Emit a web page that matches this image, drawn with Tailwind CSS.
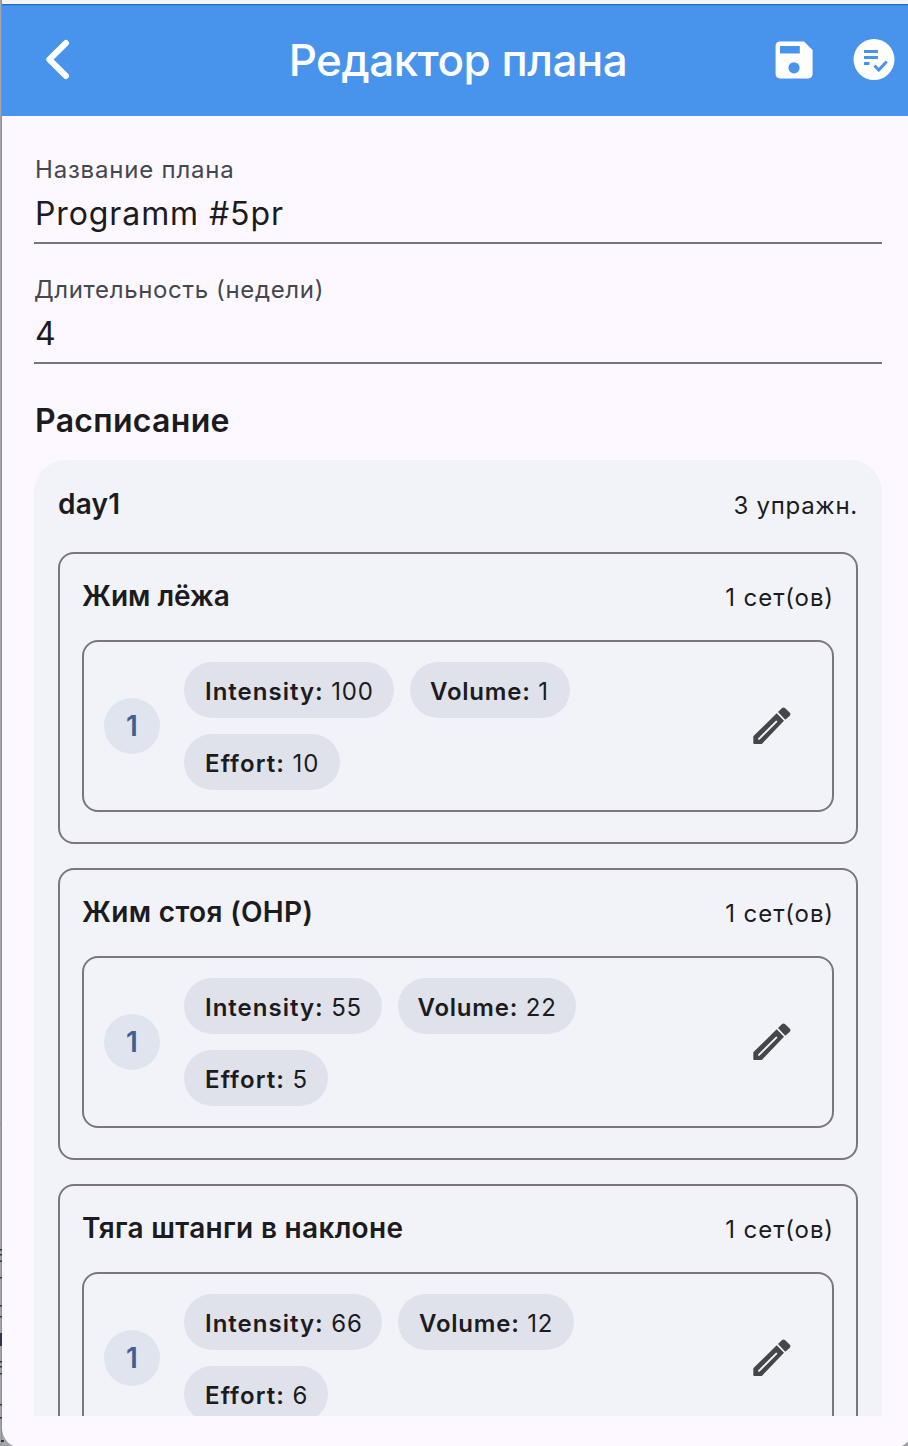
<!DOCTYPE html>
<html lang="ru">
<head>
<meta charset="utf-8">
<title>Редактор плана</title>
<script src="https://cdn.jsdelivr.net/npm/@tailwindcss/browser@4"></script>
</head>
<body class="w-[908px] h-[1446px] overflow-hidden bg-[#a6a6ae] font-['Inter','Liberation_Sans',sans-serif] text-[#1c1b20]">
<div class="relative h-[1446px] w-[908px] overflow-hidden bg-[#a3a3aa] pl-[2px]">
<!-- sliver of the desktop behind the window -->
<svg class="absolute left-0 top-0 h-[1446px] w-6" viewBox="0 0 24 1446"><path fill="#8f8f96" d="M1 0h1v1446H1zM0 1124h2v1H0z"/><path fill="#30344f" d="M0 1249h2v1.500H0zM0 1254h2v1.500H0zM0 1260.500h2v1.500H0zM0 1277h2v1.500H0zM0 1305h2v1.500H0zM0 1316h2v1.500H0zM0 1333h2v13H0zM0 1361h2v1.500H0zM0 1366h2v1.500H0zM0 1373h2v1.500H0zM0 1404h2v1.500H0zM0 1417h2v1.500H0zM1 1440h3v2H1z"/></svg>
<div class="relative flex h-[1448px] w-[911px] flex-col overflow-hidden rounded-b-[20px] bg-[#fdf8ff]">
  <div class="h-1 shrink-0 bg-[#f4f4f5]"></div>
  <header class="flex h-28 shrink-0 items-center border-t border-[#1f6fc9] bg-[#4894ed] pb-[2px] pr-[5px] text-white shadow-[inset_0_1px_0_#3f86d8]">
    <svg class="ml-8 size-12 shrink-0" viewBox="0 0 48 48" fill="none" stroke="currentColor" stroke-width="6" stroke-linecap="round" stroke-linejoin="round"><path d="M32 7 15.300 23.500 32 40"/></svg>
    <h1 class="flex-1 pl-[64px] text-center text-[44px] font-medium leading-[56px] tracking-[-0.5px]">Редактор плана</h1>
    <svg class="size-12 shrink-0" viewBox="0 0 24 24" fill="currentColor"><path d="M17 2.700H5c-1.300 0-2.200.9-2.200 2.200V19c0 1.300.9 2.200 2.200 2.200h14.100c1.300 0 2.200-.9 2.200-2.200V7l-4.300-4.300zM12 18.700a2.800 2.800 0 1 1 0-5.600 2.800 2.800 0 0 1 0 5.600zM14.900 8.700H5V5h9.900z"/></svg>
    <svg class="ml-8 mr-[10px] size-12 shrink-0" viewBox="0 0 48 48"><circle cx="24" cy="23.500" r="20.500" fill="#fff"/><g fill="none" stroke="#4894ed" stroke-width="3"><path d="M14 15.500h14M14 21.500h14M14 27.500h5.500M24.500 29.500l4.200 4.500 8-8.500"/></g></svg>
  </header>
  <main class="mx-8 h-[1300px] w-[848px] shrink-0 overflow-hidden pt-9">
    <label class="block h-[92px] border-b-2 border-[#74777f]">
      <span class="block h-8 pl-px text-[24px] leading-[35px] tracking-[0.8px] text-[#44474e]">Название плана</span>
      <span class="block pl-px text-[32px] leading-[59px] tracking-[0.9px]">Programm #5pr</span>
    </label>
    <label class="mt-7 block h-[92px] border-b-2 border-[#74777f]">
      <span class="block h-8 text-[24px] leading-[35px] tracking-[0.65px] text-[#44474e]">Длительность (недели)</span>
      <span class="block pl-px text-[32px] leading-[59px] tracking-[0.8px]">4</span>
    </label>
    <h2 class="mt-8 h-16 pl-px text-[32px] font-semibold leading-[50px] tracking-[0.3px]">Расписание</h2>
    <section class="h-[1200px] rounded-t-[32px] bg-[#f1f3f8] px-6 pt-6">
      <div class="flex h-[68px] justify-between">
        <h3 class="text-[28px] font-semibold leading-[41px] tracking-[0.2px]">day1</h3>
        <span class="text-[24px] leading-[44px] tracking-[0.7px]">3 упражн.</span>
      </div>
      <article class="mb-6 h-[292px] rounded-2xl border-2 border-[#79767f] px-[22px] pt-[22px]">
        <div class="flex h-16 justify-between">
          <h4 class="text-[28px] font-semibold leading-[41px]">Жим лёжа</h4>
          <span class="text-[24px] leading-[44px] tracking-[0.9px]">1 сет(ов)</span>
        </div>
        <div class="flex h-[172px] items-center rounded-2xl border-2 border-[#79767f] pl-5 pr-9">
          <div class="flex size-14 shrink-0 items-center justify-center rounded-full bg-[#dfe4ef] text-[28px] font-semibold text-[#415f91]">1</div>
          <div class="ml-6 flex w-[450px] flex-wrap gap-4 text-[24px] leading-[59px] tracking-[0.8px]">
            <div class="h-14 w-[210px] whitespace-nowrap rounded-full bg-[#dfe2eb] pl-[21px]"><b class="font-semibold tracking-[1px]">Intensity:</b> 100</div>
            <div class="h-14 w-[160px] whitespace-nowrap rounded-full bg-[#dfe2eb] pl-5"><b class="font-semibold">Volume:</b> 1</div>
            <div class="h-14 w-[156px] whitespace-nowrap rounded-full bg-[#dfe2eb] pl-[21px]"><b class="font-semibold tracking-[1.1px]">Effort:</b> 10</div>
          </div>
          <svg class="ml-auto size-12" viewBox="0 0 48 48"><use href="#pencil"/></svg>
        </div>
      </article>
      <article class="mb-6 h-[292px] rounded-2xl border-2 border-[#79767f] px-[22px] pt-[22px]">
        <div class="flex h-16 justify-between">
          <h4 class="text-[28px] font-semibold leading-[41px] tracking-[0.35px]">Жим стоя (OHP)</h4>
          <span class="text-[24px] leading-[44px] tracking-[0.9px]">1 сет(ов)</span>
        </div>
        <div class="flex h-[172px] items-center rounded-2xl border-2 border-[#79767f] pl-5 pr-9">
          <div class="flex size-14 shrink-0 items-center justify-center rounded-full bg-[#dfe4ef] text-[28px] font-semibold text-[#415f91]">1</div>
          <div class="ml-6 flex w-[450px] flex-wrap gap-4 text-[24px] leading-[59px] tracking-[0.8px]">
            <div class="h-14 w-[197.500px] whitespace-nowrap rounded-full bg-[#dfe2eb] pl-[21px]"><b class="font-semibold tracking-[1px]">Intensity:</b> 55</div>
            <div class="h-14 w-[178.500px] whitespace-nowrap rounded-full bg-[#dfe2eb] pl-5"><b class="font-semibold">Volume:</b> 22</div>
            <div class="h-14 w-[144px] whitespace-nowrap rounded-full bg-[#dfe2eb] pl-[21px]"><b class="font-semibold tracking-[1.1px]">Effort:</b> 5</div>
          </div>
          <svg class="ml-auto size-12" viewBox="0 0 48 48"><use href="#pencil"/></svg>
        </div>
      </article>
      <article class="mb-6 h-[292px] rounded-2xl border-2 border-[#79767f] px-[22px] pt-[22px]">
        <div class="flex h-16 justify-between">
          <h4 class="text-[28px] font-semibold leading-[41px] tracking-[0.3px]">Тяга штанги в наклоне</h4>
          <span class="text-[24px] leading-[44px] tracking-[0.9px]">1 сет(ов)</span>
        </div>
        <div class="flex h-[172px] items-center rounded-2xl border-2 border-[#79767f] pl-5 pr-9">
          <div class="flex size-14 shrink-0 items-center justify-center rounded-full bg-[#dfe4ef] text-[28px] font-semibold text-[#415f91]">1</div>
          <div class="ml-6 flex w-[450px] flex-wrap gap-4 text-[24px] leading-[59px] tracking-[0.8px]">
            <div class="h-14 w-[198px] whitespace-nowrap rounded-full bg-[#dfe2eb] pl-[21px]"><b class="font-semibold tracking-[1px]">Intensity:</b> 66</div>
            <div class="h-14 w-[176px] whitespace-nowrap rounded-full bg-[#dfe2eb] pl-[21px]"><b class="font-semibold">Volume:</b> 12</div>
            <div class="h-14 w-[144px] whitespace-nowrap rounded-full bg-[#dfe2eb] pl-[21px]"><b class="font-semibold tracking-[1.1px]">Effort:</b> 6</div>
          </div>
          <svg class="ml-auto size-12" viewBox="0 0 48 48"><use href="#pencil"/></svg>
        </div>
      </article>
    </section>
  </main>
</div>
</div>
<svg class="hidden"><defs><g id="pencil"><path fill="#44474a" d="M5.300 42v-7q0-.7.500-1.200L28.700 11.300 36 18.700 13.800 42H6.300q-1 0-1-1zM30 10l3.800-3.800q1.700-1.500 3.400 0l4.400 4.400q1.700 1.700 0 3.400L37.300 17.700z"/><path d="M11 36.900 28.300 19.600" stroke="#f1f3f8" stroke-width="2" stroke-linecap="round"/></g></defs></svg>
</body>
</html>
